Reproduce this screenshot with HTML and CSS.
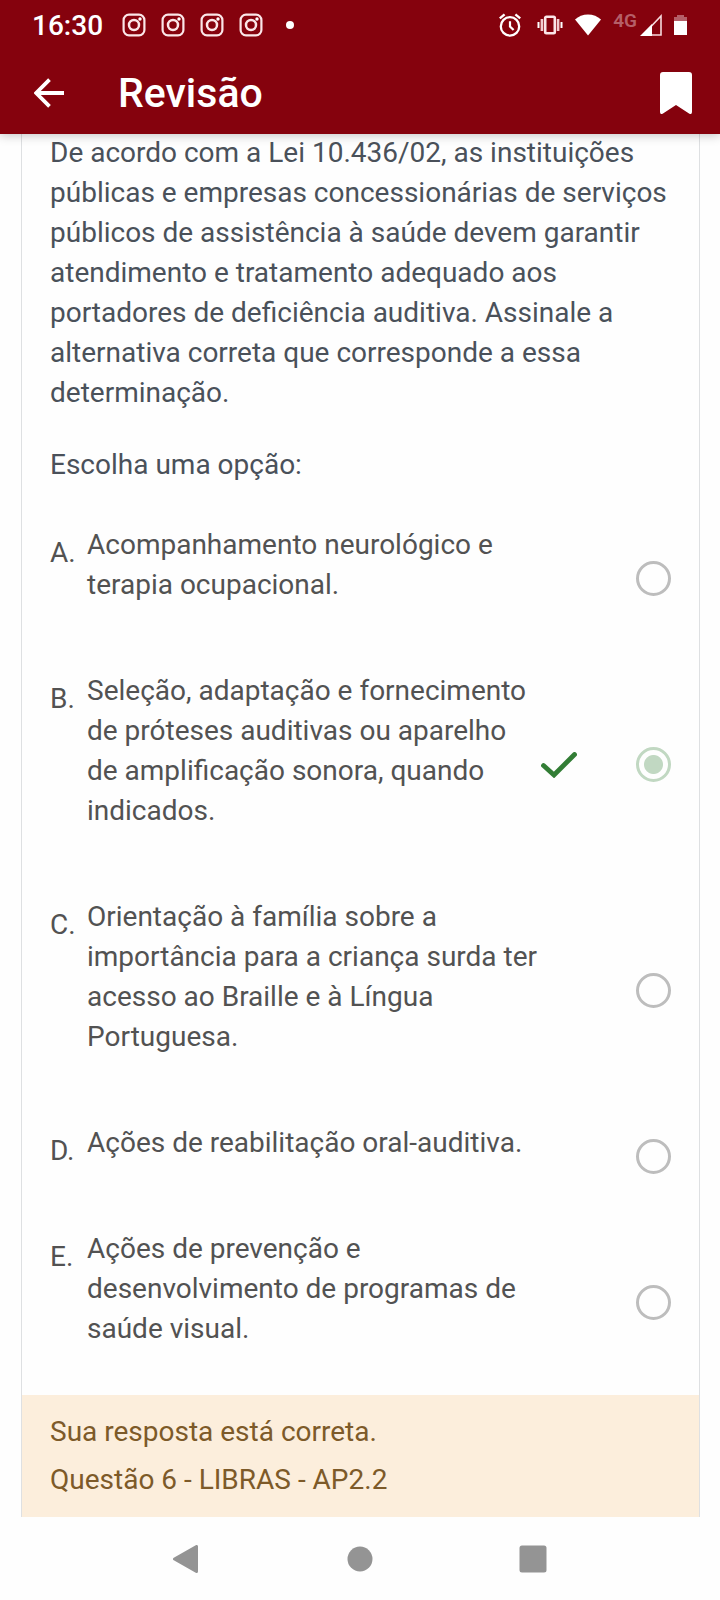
FILE: index.html
```html
<!DOCTYPE html>
<html lang="pt-BR">
<head>
<meta charset="utf-8">
<meta name="viewport" content="width=device-width, initial-scale=1">
<title>Revisão</title>
<link rel="stylesheet" href="styles.css">
</head>
<body>
<svg class="defs" aria-hidden="true">
  <symbol id="camera" viewBox="0 0 24 24">
    <rect x="1.600" y="1.600" width="20.800" height="20.800" rx="5.400" fill="none" stroke="#fbe6e8" stroke-width="2.200"/>
    <circle cx="12" cy="12" r="5" fill="none" stroke="#fbe6e8" stroke-width="2.500"/>
    <circle cx="18" cy="6" r="1.700" fill="#fff"/>
  </symbol>
</svg>
<header class="top">
  <div class="status">
    <span class="clock">16:30</span>
    <div class="notices">
      <svg class="notice"><use href="#camera"/></svg>
      <svg class="notice"><use href="#camera"/></svg>
      <svg class="notice"><use href="#camera"/></svg>
      <svg class="notice"><use href="#camera"/></svg>
    </div>
    <span class="more"></span>
    <div class="system">
      <svg class="alarm" viewBox="0 0 22 24" fill="none" stroke="#fff">
        <circle cx="11" cy="13.400" r="9.200" stroke-width="2.300"/>
        <path d="M11 8.200v5.400l3.600 3.400" stroke-width="2.200"/>
        <path d="M.8 5.400 5.600 1.400M21.200 5.400 16.400 1.400" stroke-width="2.400"/>
      </svg>
      <svg class="vibrate" viewBox="0 0 26 22">
        <rect x="8.200" y="2.800" width="9.600" height="16.400" rx="1.200" fill="none" stroke="#fbe6e8" stroke-width="2.600"/>
        <path d="M4.900 5v12M21.100 5v12" stroke="#f3ccd0" stroke-width="2.600"/>
        <path d="M1.500 8v6M24.500 8v6" stroke="#fff" stroke-width="2"/>
      </svg>
      <svg class="wifi" viewBox="0 0 26 22"><path d="M0 5.600C3.400 2.200 8 .4 13 .4S22.600 2.200 26 5.600L13 21.600z" fill="#fff"/></svg>
      <div class="mobile">
        <span class="network">4G</span>
        <svg class="signal" viewBox="0 0 22 22">
          <path d="M21 2v19H3z" fill="none" stroke="#f6dadd" stroke-width="1.600"/>
          <path d="M0 22 12 10v12z" fill="#fff"/>
        </svg>
      </div>
      <svg class="battery" viewBox="0 0 13 20"><path d="M0 2h3V0h7v2h3v4H0z" fill="#b55f68"/><path d="M0 6h13v14H0z" fill="#fff"/></svg>
    </div>
  </div>
  <div class="appbar">
    <button class="icon-button" aria-label="Voltar">
      <svg class="back" viewBox="0 0 30 30"><path d="M30 15H3M15.500 1.600 2.200 15l13.300 13.400" fill="none" stroke="#fff" stroke-width="3.800"/></svg>
    </button>
    <h1 class="title">Revisão</h1>
    <button class="icon-button" aria-label="Marcar questão">
      <svg class="bookmark" viewBox="0 0 32 42"><path d="M3 0h26q3 0 3 3v37q0 3-3 1.500L16 33 3 41.500Q0 43 0 40V3q0-3 3-3z" fill="#fff"/></svg>
    </button>
  </div>
</header>
<main class="page">
  <form class="card">
    <div class="question">
      <p class="text">De acordo com a Lei 10.436/02, as instituições públicas e empresas concessionárias de serviços públicos de assistência à saúde devem garantir atendimento e tratamento adequado aos portadores de deficiência auditiva. Assinale a alternativa correta que corresponde a essa determinação.</p>
      <p class="text">Escolha uma opção:</p>
    </div>
    <div class="options">
      <label class="option" for="a"><span class="letter">A.</span><span class="answer">Acompanhamento neurológico e terapia ocupacional.</span><span class="mark"></span><input class="radio" type="radio" name="answer" id="a"></label>
      <label class="option" for="b"><span class="letter">B.</span><span class="answer">Seleção, adaptação e fornecimento de próteses auditivas ou aparelho de amplificação sonora, quando indicados.</span><span class="mark"><svg class="check" viewBox="0 0 36 26"><path d="M2.500 13.500 13 23 33.500 2.500" fill="none" stroke="#327d35" stroke-width="4.800" stroke-linecap="round" stroke-linejoin="miter"/></svg></span><input class="radio" type="radio" name="answer" id="b" checked></label>
      <label class="option" for="c"><span class="letter">C.</span><span class="answer">Orientação à família sobre a importância para a criança surda ter acesso ao Braille e à Língua Portuguesa.</span><span class="mark"></span><input class="radio" type="radio" name="answer" id="c"></label>
      <label class="option" for="d"><span class="letter">D.</span><span class="answer">Ações de reabilitação oral-auditiva.</span><span class="mark"></span><input class="radio" type="radio" name="answer" id="d"></label>
      <label class="option" for="e"><span class="letter">E.</span><span class="answer">Ações de prevenção e desenvolvimento de programas de saúde visual.</span><span class="mark"></span><input class="radio" type="radio" name="answer" id="e"></label>
    </div>
    <div class="feedback">
      <p class="text">Sua resposta está correta.</p>
      <p class="text">Questão 6 - LIBRAS - AP2.2</p>
    </div>
  </form>
</main>
<nav class="navbar">
  <button class="icon-button" aria-label="Voltar"><svg class="nav-icon" viewBox="0 0 28 28"><path d="M23.500 1.500v25L1.500 14z" fill="#949494" stroke="#949494" stroke-width="3" stroke-linejoin="round"/></svg></button>
  <button class="icon-button" aria-label="Início"><svg class="nav-icon" viewBox="0 0 28 28"><circle cx="14" cy="14" r="12.500" fill="#949494"/></svg></button>
  <button class="icon-button" aria-label="Recentes"><svg class="nav-icon" viewBox="0 0 28 28"><rect x=".5" y=".5" width="27" height="27" rx="2.500" fill="#949494"/></svg></button>
</nav>
</body>
</html>
```
FILE: styles.css
```css
* { box-sizing: border-box; }
body {
  margin: 0;
  min-height: 100vh;
  display: flex;
  flex-direction: column;
  background: #fefefe;
  color: #4a515a;
  font: 400 28px/40px Roboto, sans-serif;
}
svg { display: block; }
.defs { position: absolute; width: 0; height: 0; }
.top {
  position: relative;
  background: #85020d;
  color: #fff;
  box-shadow: 0 1px 10px rgba(0, 0, 0, .25);
}
.status {
  display: flex;
  align-items: center;
  height: 50px;
  padding: 0 33px 0 32px;
}
.clock { font-weight: 500; padding-top: 2px; }
.notices { display: flex; gap: 15px; margin-left: 19px; }
.notice { width: 24px; height: 24px; }
.more { width: 8px; height: 8px; margin-left: 23px; border-radius: 50%; background: #fff; }
.system { display: flex; align-items: center; gap: 12px; margin-left: auto; }
.alarm { width: 22px; height: 24px; }
.vibrate { width: 26px; height: 22px; margin-left: 4px; }
.wifi { width: 26px; height: 22px; }
.mobile { display: flex; align-items: center; gap: 3px; }
.network { font-size: 19px; line-height: 20px; font-weight: 600; padding-bottom: 8px; color: #b55f68; }
.signal { width: 22px; height: 22px; }
.battery { width: 13px; height: 20px; }
.appbar {
  display: flex;
  align-items: center;
  height: 84px;
  padding: 1px 28px 0 34px;
}
.title { flex: 1; margin: 0 0 0 54px; font-size: 41px; line-height: 48px; font-weight: 500; }
.icon-button { padding: 0; border: 0; background: none; }
.back { width: 30px; height: 30px; }
.bookmark { width: 32px; height: 42px; }
.page { flex: 1; padding: 0 20px 0 21px; }
.card {
  border: 1px solid #dee0e2;
  border-width: 0 1px;
}
.text { margin: 0; }
.question { display: grid; gap: 32px; padding: 0 28px 20px; margin-top: -1px; }
.options { color: #525252; }
.option {
  display: grid;
  grid-template-columns: 37px 1fr 95px 35px;
  align-items: center;
  padding: 20px 28px 19px;
}
.letter { align-self: start; padding-top: 8px; }
.answer { padding-bottom: 27px; }
.check { width: 36px; height: 26px; }
.radio {
  appearance: none;
  width: 35px;
  height: 35px;
  margin: 0;
  border: 3px solid #bdbdbd;
  border-radius: 50%;
  background: #fefefe;
}
.radio:checked {
  border-color: #c1d8c2;
  background: radial-gradient(circle, #c1d8c2 9px, #fefefe 10px);
}
.feedback {
  display: grid;
  gap: 8px;
  padding: 17px 28px;
  background: #fceedc;
  color: #7d5a29;
}
.navbar {
  display: flex;
  align-items: center;
  justify-content: center;
  gap: 145px;
  height: 84px;
}
.nav-icon { width: 28px; height: 28px; }
```
